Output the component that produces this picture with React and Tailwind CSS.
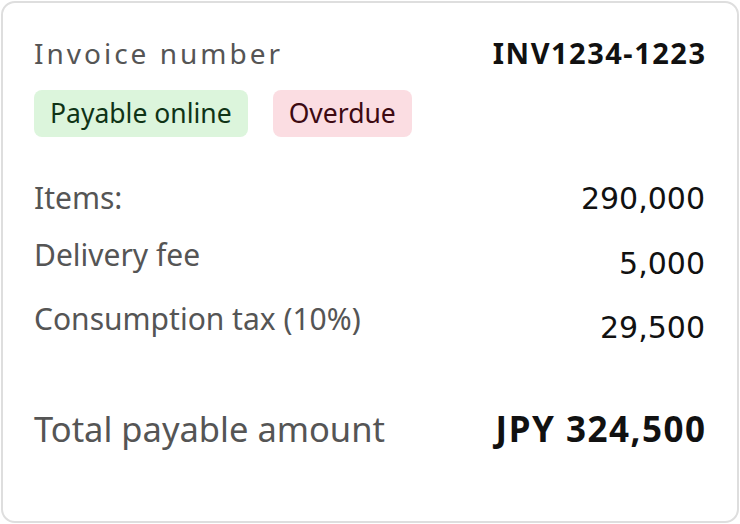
export default function App() {
  return (
    <div className="w-[740px] h-[524px] bg-white p-px">
      <div
        className="w-[738px] h-[522px] rounded-[14px] border-2 border-[#dedede] bg-white pl-[31px] pr-[32px] pt-[32px] flex flex-col"
        style={{ fontFamily: '"Noto Sans", sans-serif' }}
      >
        <div className="flex items-baseline justify-between h-[36px]">
          <span className="text-[28px] leading-[36px] text-[#555] tracking-[3px]">Invoice number</span>
          <span className="text-[29px] leading-[36px] font-bold text-[#111] tracking-[1.5px] mr-[-1.5px]">INV1234-1223</span>
        </div>
        <div className="flex gap-[25px] mt-[19px]">
          <span className="h-[47px] px-[16px] flex items-center rounded-[8px] bg-[#dcf5dc] text-[#0f3316] text-[26.5px]">Payable online</span>
          <span className="h-[47px] px-[16px] flex items-center rounded-[8px] bg-[#fbdde2] text-[#3d0a12] text-[26.5px]">Overdue</span>
        </div>
        <div className="flex justify-between items-baseline mt-[43px]">
          <span className="text-[30px] leading-[36px] text-[#555]">Items:</span>
          <span className="text-[30px] leading-[36px] text-[#111]" style={{ fontFamily: '"DejaVu Sans", sans-serif' }}>290,000</span>
        </div>
        <div className="flex justify-between items-start mt-[20px]">
          <span className="text-[30px] leading-[36px] text-[#555]">Delivery fee</span>
          <span className="text-[30px] leading-[36px] text-[#111] mt-[9px]" style={{ fontFamily: '"DejaVu Sans", sans-serif' }}>5,000</span>
        </div>
        <div className="flex justify-between items-start mt-[19px]">
          <span className="text-[30px] leading-[36px] text-[#555]">Consumption tax (10%)</span>
          <span className="text-[30px] leading-[36px] text-[#111] mt-[9px]" style={{ fontFamily: '"DejaVu Sans", sans-serif' }}>29,500</span>
        </div>
        <div className="flex justify-between items-baseline mt-[61px]">
          <span className="text-[34.5px] leading-[44px] text-[#555]">Total payable amount</span>
          <span className="text-[35px] leading-[44px] font-bold text-[#111] tracking-[1.5px] mr-[-1.5px]">JPY 324,500</span>
        </div>
      </div>
    </div>
  );
}
